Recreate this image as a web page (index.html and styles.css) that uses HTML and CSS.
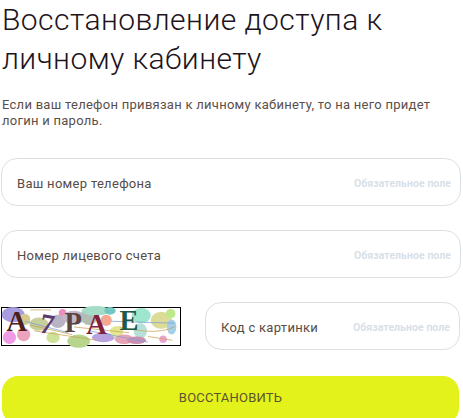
FILE: index.html
```html
<!DOCTYPE html>
<html lang="ru">
<head>
    <meta charset="UTF-8">
    <title>Восстановление доступа</title>
    <link rel="stylesheet" href="styles.css">
</head>
<body>
    <div class="restore">
        <h1>Восстановление доступа к личному кабинету</h1>
        <p class="note">Если ваш телефон привязан к личному кабинету, то на него придет логин и пароль.</p>

        <div class="field field-first">
            <span class="field-label">Ваш номер телефона</span>
            <span class="field-hint">Обязательное поле</span>
        </div>
        <div class="field field-second">
            <span class="field-label">Номер лицевого счета</span>
            <span class="field-hint">Обязательное поле</span>
        </div>

        <div class="captcha-row">
            <svg class="captcha" width="180" height="39" viewBox="0 0 180 39">
                <rect width="180" height="39" fill="#fff"/>
                <ellipse cx="8" cy="7" rx="12" ry="8" fill="#a99be0"/>
                <circle cx="4" cy="31" r="7" fill="#ef9be6"/>
                <circle cx="19" cy="28" r="7" fill="#eda3bd"/>
                <ellipse cx="20" cy="12" rx="6" ry="6" fill="#d8c98f"/>
                <circle cx="60" cy="5" r="4" fill="#ee8fc0"/>
                <ellipse cx="35" cy="17" rx="10" ry="7" fill="#c7cf9a"/>
                <ellipse cx="50" cy="31" rx="7" ry="6" fill="#cfe29a"/>
                <ellipse cx="55" cy="14" rx="8" ry="7" fill="#b9b3c4"/>
                <ellipse cx="72" cy="10" rx="12" ry="7" fill="#c2b7c8"/>
                <ellipse cx="77" cy="35" rx="12" ry="7" fill="#b7d58c"/>
                <ellipse cx="88" cy="9" rx="9" ry="9" fill="#b3bdb5"/>
                <ellipse cx="95" cy="3" rx="15" ry="5" fill="#a5dcc8"/>
                <circle cx="106" cy="13" r="6" fill="#f4a88f"/>
                <ellipse cx="110" cy="3" rx="6" ry="4" fill="#74c7c0"/>
                <ellipse cx="103" cy="31" rx="12" ry="5" fill="#b8a3e0"/>
                <ellipse cx="117" cy="25" rx="7" ry="6" fill="#e2e88f"/>
                <ellipse cx="125" cy="33" rx="10" ry="5" fill="#e6a3b5"/>
                <ellipse cx="143" cy="8" rx="10" ry="8" fill="#9fe6cf"/>
                <ellipse cx="142" cy="24" rx="7" ry="8" fill="#b6e0d8"/>
                <ellipse cx="138" cy="34" rx="10" ry="4" fill="#c98fb0"/>
                <ellipse cx="164" cy="13" rx="11" ry="9" fill="#dcdc98"/>
                <circle cx="166" cy="33" r="4" fill="#eca5d0"/>
                <circle cx="174" cy="6" r="5" fill="#bfe88a"/>
                <ellipse cx="175" cy="20" rx="5" ry="8" fill="#a3cfe8"/>
                <path d="M26 2 H48 M26 18 L70 28 M30 24 L96 34 M72 20 L130 26 M120 20 C140 24 160 28 178 20 M150 30 L176 34" fill="none" stroke="#c9a35a" stroke-width="0.8"/>
                <path d="M20 14 L66 26 M88 24 L150 36 M112 14 L178 16" fill="none" stroke="#7f9fd0" stroke-width="0.8"/>
                <text class="captcha-char" x="1" y="24" fill="#4a1f1c">A</text>
                <text class="captcha-char" x="36" y="27" fill="#5a3a70" transform="rotate(10 44 18)">7</text>
                <text class="captcha-char" x="62" y="25" fill="#5c4440">P</text>
                <text class="captcha-char" x="85" y="27" fill="#80203c">A</text>
                <text class="captcha-char" x="120" y="23" fill="#1f5a48">E</text>
            </svg>
            <div class="field field-code">
                <span class="field-label">Код с картинки</span>
                <span class="field-hint">Обязательное поле</span>
            </div>
        </div>

        <button class="submit" type="button">ВОССТАНОВИТЬ</button>
    </div>
</body>
</html>
```

FILE: styles.css
```css
html, body {
    margin: 0;
    padding: 0;
    height: 418px;
    overflow: hidden;
    background-color: #fff;
}

body {
    font-family: "Roboto", "Open Sans", sans-serif;
}

.restore {
    width: 463px;
}

h1 {
    margin: 0;
    padding: 0 30px 0 2px;
    font-size: 30px;
    font-weight: 300;
    line-height: 39px;
    letter-spacing: 0.45px;
    color: #1d1420;
}

.note {
    margin: 19px 0 0;
    padding: 0 20px 0 2px;
    font-size: 13px;
    line-height: 16px;
    letter-spacing: 0.27px;
    color: #5a4f4a;
}

.field {
    display: flex;
    align-items: center;
    justify-content: space-between;
    box-sizing: border-box;
    height: 48px;
    padding: 2px 9px 0 15px;
    background-color: #fff;
    border: 1px solid #dcdfe3;
    border-radius: 16px;
}

.field-first {
    margin: 29px 2px 0 1px;
}

.field-second {
    margin: 24px 2px 0 1px;
}

.field-label {
    font-size: 13px;
    letter-spacing: 0.3px;
    color: #574c46;
}

.field-hint {
    font-size: 10.5px;
    font-weight: 700;
    letter-spacing: 0.05px;
    color: #d9dfe8;
}

.captcha-row {
    display: flex;
    align-items: center;
    margin: 24px 3px 0 1px;
}

.captcha {
    display: block;
    flex: none;
    border: 1px solid #000;
    width: 178px;
    height: 37px;
    overflow: visible;
}

.captcha-char {
    font-family: "Liberation Serif", serif;
    font-size: 30px;
    font-weight: 700;
}

.field-code {
    flex: 1;
    margin-left: 24px;
}

.submit {
    display: block;
    width: 457px;
    height: 48px;
    margin: 26px 0 0 2px;
    padding: 0 0 6px;
    border: 0;
    border-radius: 16px;
    background-color: #e3f21a;
    font-family: inherit;
    font-size: 13px;
    letter-spacing: 0.2px;
    color: #5c5330;
}
```
